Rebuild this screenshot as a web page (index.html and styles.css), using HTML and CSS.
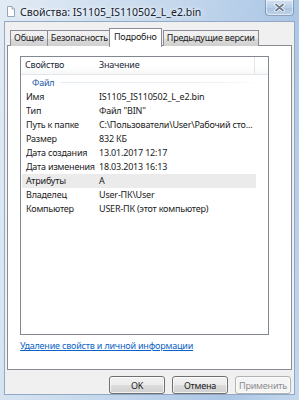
FILE: index.html
```html
<!DOCTYPE html>
<html lang="ru">
<head>
    <meta charset="UTF-8">
    <title>Свойства: IS1105_IS110502_L_e2.bin</title>
    <link rel="stylesheet" href="styles.css">
</head>
<body>
<div class="window">
    <div class="titlebar">
        <svg class="file-icon" width="8" height="11" viewBox="0 0 8 11">
            <path d="M0.5 0.5 H5 L7.5 3 V10.5 H0.5 Z" fill="#fff" stroke="#9aa6b4"/>
            <path d="M5 0.5 V3 H7.5" fill="#e6eaee" stroke="#9aa6b4"/>
        </svg>
        <span class="caption">Свойства: IS1105_IS110502_L_e2.bin</span>
        <div class="close-btn">
            <svg width="11" height="9" viewBox="0 0 11 9">
                <path d="M2 1.5 L9 7.5 M9 1.5 L2 7.5" stroke="#fff" stroke-width="3.4" stroke-linecap="round"/>
                <path d="M2 1.5 L9 7.5 M9 1.5 L2 7.5" stroke="#6d7b8f" stroke-width="1.8" stroke-linecap="round"/>
            </svg>
        </div>
    </div>
    <div class="client">
        <div class="tabs">
            <div class="tab">Общие</div>
            <div class="tab">Безопасность</div>
            <div class="tab active">Подробно</div>
            <div class="tab">Предыдущие версии</div>
        </div>
        <div class="panel">
            <div class="listview">
                <div class="lv-header">
                    <div class="col-name">Свойство</div>
                    <div class="col-value">Значение</div>
                    <div class="col-rest"></div>
                </div>
                <div class="group"><span>Файл</span><i></i></div>
                <div class="row"><div class="col-name">Имя</div><div class="col-value">IS1105_IS110502_L_e2.bin</div></div>
                <div class="row"><div class="col-name">Тип</div><div class="col-value">Файл "BIN"</div></div>
                <div class="row"><div class="col-name">Путь к папке</div><div class="col-value">C:\Пользователи\User\Рабочий сто...</div></div>
                <div class="row"><div class="col-name">Размер</div><div class="col-value">832 КБ</div></div>
                <div class="row"><div class="col-name">Дата создания</div><div class="col-value">13.01.2017 12:17</div></div>
                <div class="row"><div class="col-name">Дата изменения</div><div class="col-value">18.03.2013 16:13</div></div>
                <div class="row hover"><div class="col-name">Атрибуты</div><div class="col-value">A</div></div>
                <div class="row"><div class="col-name">Владелец</div><div class="col-value">User-ПК\User</div></div>
                <div class="row"><div class="col-name">Компьютер</div><div class="col-value">USER-ПК (этот компьютер)</div></div>
            </div>
            <a class="remove-link" href="#">Удаление свойств и личной информации</a>
        </div>
        <div class="buttons">
            <button class="btn">OK</button>
            <button class="btn">Отмена</button>
            <button class="btn disabled">Применить</button>
        </div>
    </div>
</div>
</body>
</html>
```

FILE: styles.css
```css
* {
    margin: 0;
    padding: 0;
    box-sizing: border-box;
}

body {
    width: 299px;
    height: 400px;
    overflow: hidden;
    font-family: "Noto Sans", "Liberation Sans", sans-serif;
    font-size: 9px;
    letter-spacing: -0.2px;
    color: #1b1b1b;
}

.window {
    display: flex;
    flex-direction: column;
    width: 299px;
    height: 400px;
    background: linear-gradient(100deg, #e2ebf5 0%, #cfdfef 30%, #bfd4eb 55%, #abc6e5 80%, #c4d8ee 100%);
}

.titlebar {
    display: flex;
    align-items: center;
    height: 21px;
    padding-left: 7px;
    position: relative;
}

.file-icon {
    margin-right: 5px;
    margin-top: 2px;
}

.caption {
    font-size: 10.5px;
    letter-spacing: 0;
    color: #15202c;
    text-shadow: 0 0 6px rgba(255, 255, 255, .95), 0 0 3px rgba(255, 255, 255, .9);
    margin-top: 2px;
}

.close-btn {
    position: absolute;
    top: 0;
    right: 5px;
    width: 29px;
    height: 16px;
    display: flex;
    align-items: center;
    justify-content: center;
    border: 1px solid rgba(90, 110, 140, .55);
    border-top: 0;
    border-radius: 0 0 4px 4px;
    background: linear-gradient(#d3e1f0, #b9cfe7 50%, #a8c2e0 51%, #bed3ea);
    box-shadow: inset 0 0 0 1px rgba(255, 255, 255, .5);
}

.client {
    flex: 1;
    margin: 0 4px 5px 4px;
    padding: 6px 2px 0 2px;
    background: #f0f0f0;
    border: 1px solid #93a9c3;
    display: flex;
    flex-direction: column;
}

.tabs {
    display: flex;
    align-items: flex-end;
    height: 18px;
    padding-left: 3px;
    position: relative;
    z-index: 1;
}

.tab {
    height: 16px;
    line-height: 14px;
    padding: 0 3px;
    border: 1px solid #898c95;
    border-bottom: 0;
    margin-right: -1px;
    background: linear-gradient(#f2f2f2, #ebebeb 50%, #dddddd 51%, #cfcfcf);
    white-space: nowrap;
}

.tab.active {
    height: 19px;
    margin: 0 1px 0 -2px;
    padding: 0 4px;
    line-height: 16px;
    background: #fff;
    margin-bottom: -1px;
}

.panel {
    height: 325px;
    margin-top: -1px;
    background: #fff;
    border: 1px solid #898c95;
    padding: 10px 22px 0 12px;
}

.listview {
    height: 279px;
    border: 1px solid #828790;
}

.lv-header {
    display: flex;
    height: 18px;
    line-height: 16px;
    border-bottom: 1px solid #e3e5e8;
    background: linear-gradient(#fff, #fff 50%, #f7f8f9);
    color: #1e2a3a;
}

.col-name {
    width: 78px;
    padding-left: 4px;
    white-space: nowrap;
}

.col-value {
    width: 156px;
    white-space: nowrap;
}

.lv-header .col-value {
    border-right: 1px solid #e3e5e8;
}

.col-rest {
    flex: 1;
}

.group {
    display: flex;
    align-items: center;
    height: 15px;
    padding-left: 11px;
    color: #1e5ca6;
}

.group i {
    flex: none;
    width: 200px;
    height: 1px;
    margin-left: 6px;
    background: linear-gradient(90deg, #e4ebf3, #eef2f7 80%, rgba(255, 255, 255, 0));
}

.row {
    display: flex;
    height: 14px;
    line-height: 14px;
    margin-left: 1px;
    width: 234px;
}

.row .col-name {
    width: 77px;
}

.row.hover {
    background: #ebebeb;
}

.remove-link {
    display: inline-block;
    margin-top: 4px;
    color: #0a64c8;
    text-decoration: underline;
}

.buttons {
    display: flex;
    justify-content: flex-end;
    gap: 7px;
    margin-top: 6px;
    padding-right: 1px;
}

.btn {
    width: 56px;
    height: 18px;
    font-family: inherit;
    font-size: 9px;
    letter-spacing: -0.2px;
    color: #1b1b1b;
    border: 1px solid #707070;
    border-radius: 3px;
    background: linear-gradient(#f2f2f2, #ebebeb 50%, #dddddd 51%, #cfcfcf);
    box-shadow: inset 0 0 0 1px rgba(255, 255, 255, .7);
}

.btn.disabled {
    color: #8d8d8d;
    border-color: #adb2b5;
    background: #f4f4f4;
}
```
